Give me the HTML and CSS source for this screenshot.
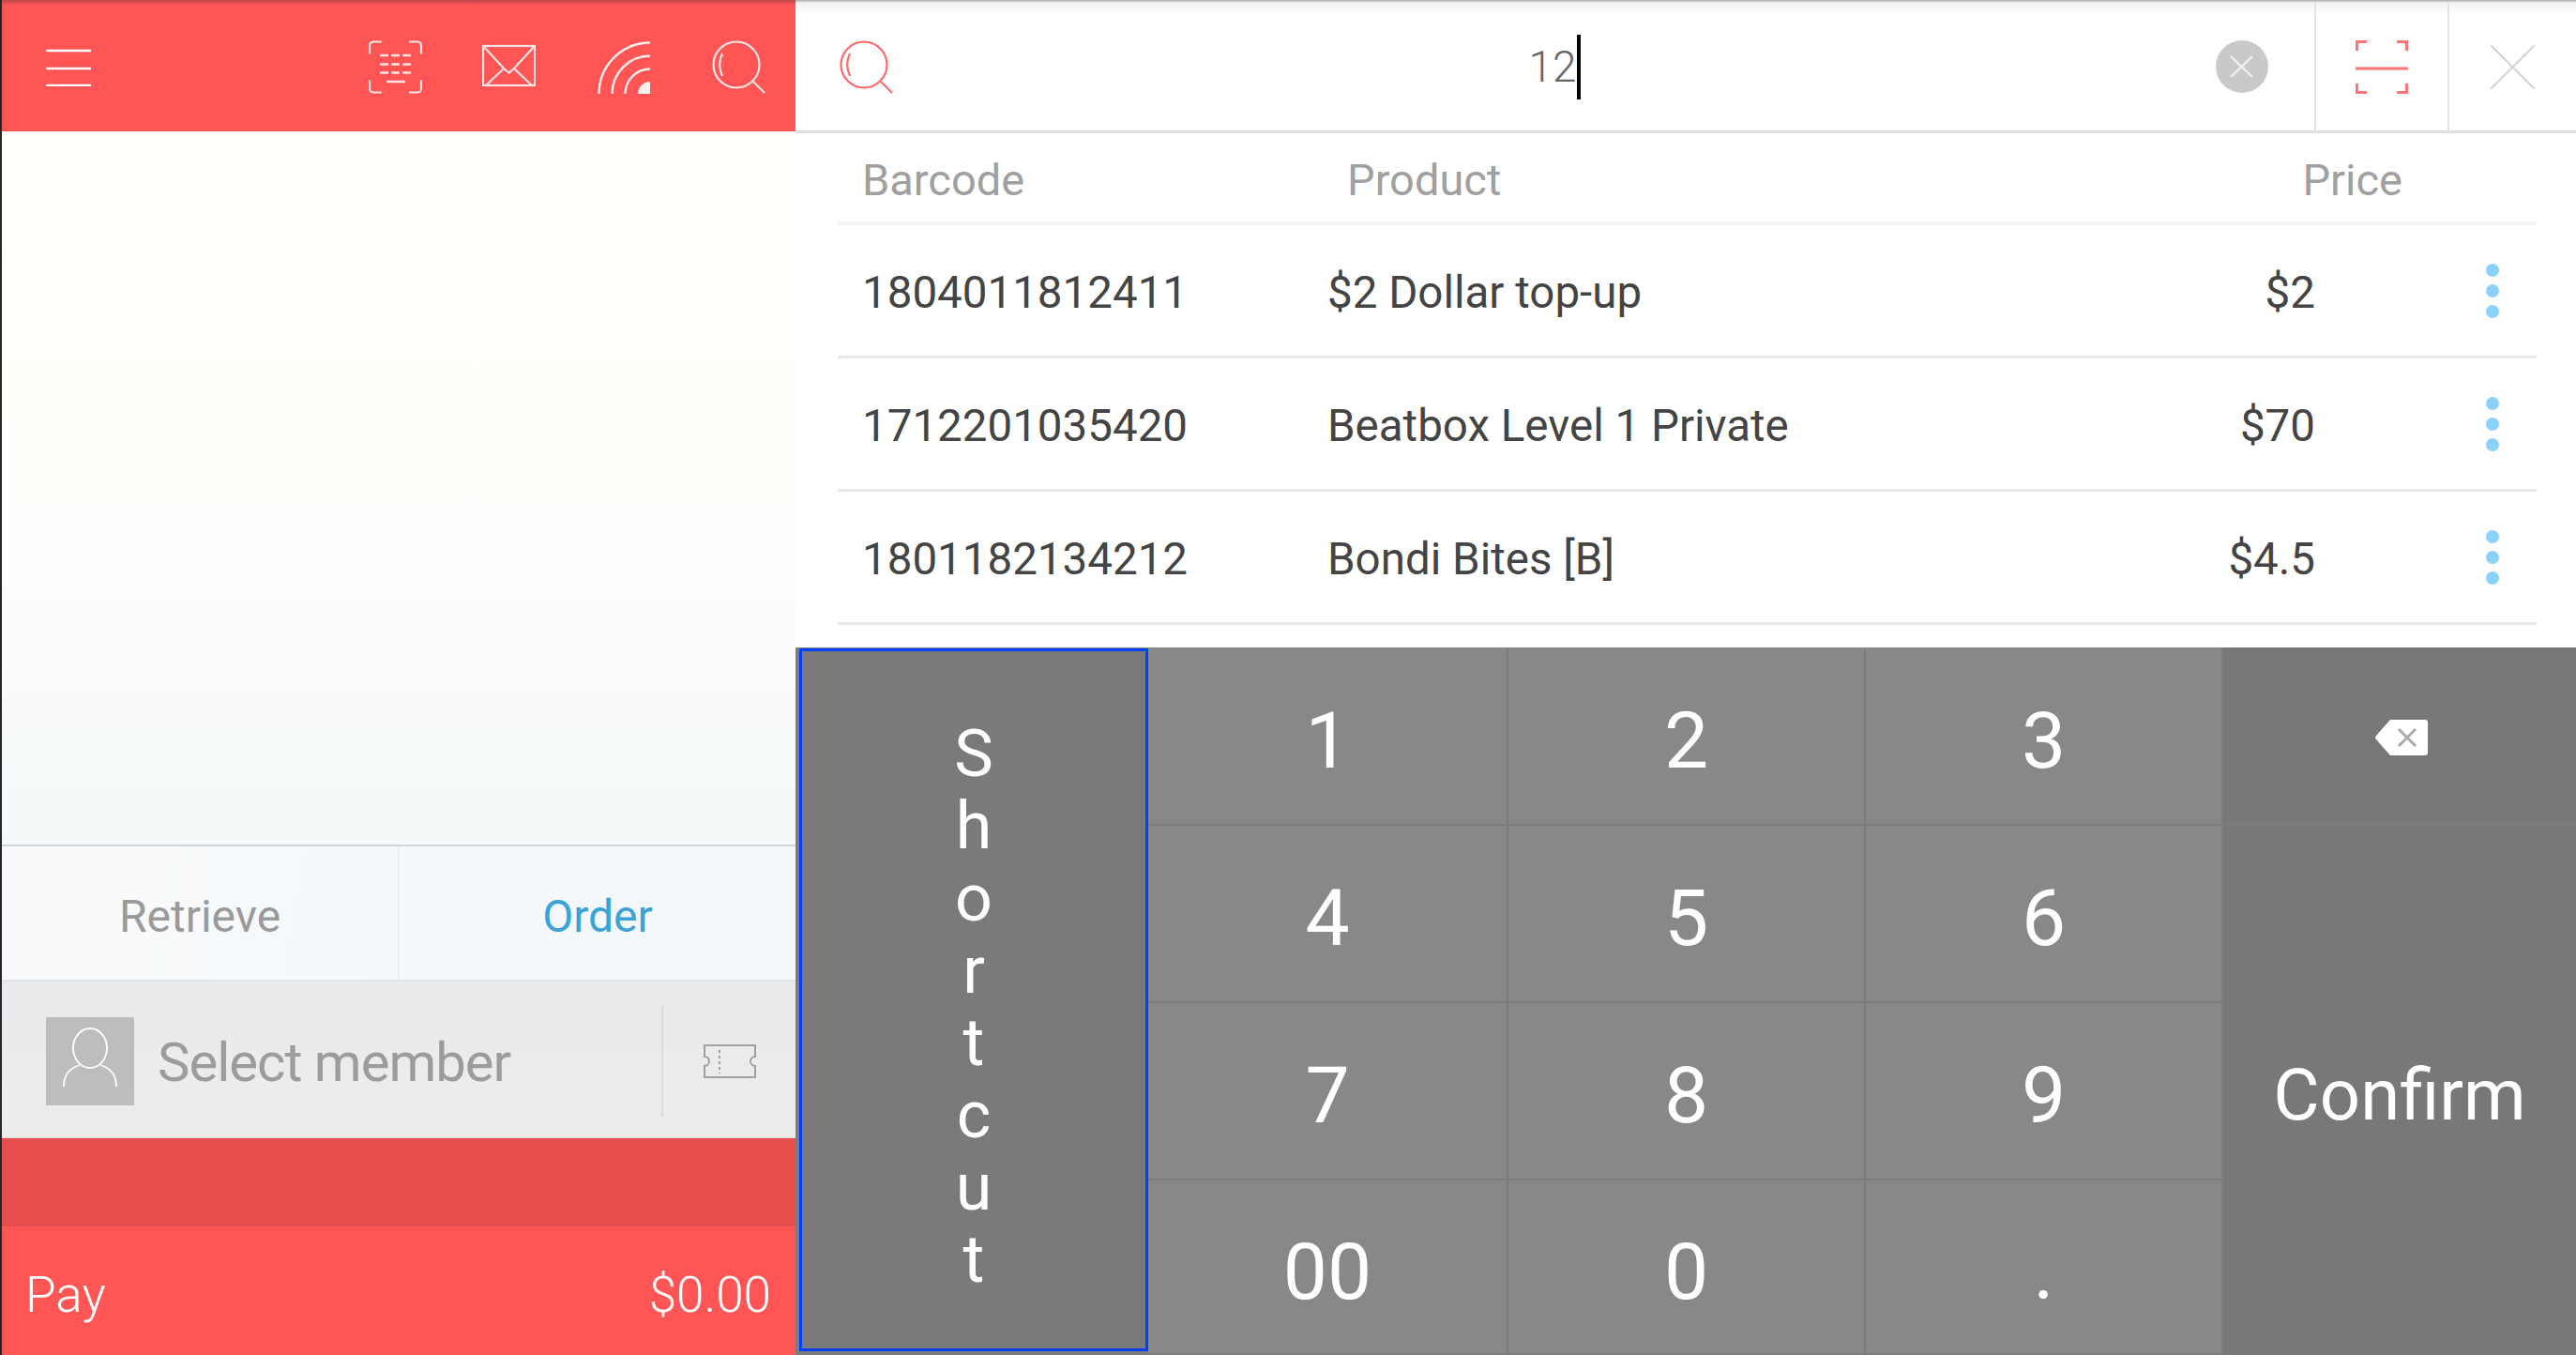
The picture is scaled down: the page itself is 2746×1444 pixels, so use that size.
FILE: index.html
```html
<!DOCTYPE html>
<html lang="en">
<head>
    <meta charset="UTF-8">
    <title>Product search</title>
    <link rel="stylesheet" href="styles.css">
</head>
<body>

    <div class="left-panel">
        <div class="top-bar">
            <svg class="menu-icon" viewBox="0 0 48 40" fill="none" stroke="#fff" stroke-width="2.4">
                <path d="M0 2h48M0 21h48M0 39h48"/>
            </svg>
            <div class="top-icons">
                <svg class="top-icon" viewBox="0 0 57 57" fill="none" stroke="#fff" stroke-width="2.2" opacity="0.85">
                    <path d="M14 1.500H5a4 4 0 0 0-4 4v9M43 1.500h9a4 4 0 0 1 4 4v9M14 55.500H5a4 4 0 0 1-4-4v-9M43 55.500h9a4 4 0 0 0 4-4v-9"/>
                    <path stroke-width="2.500" stroke-dasharray="9 3" d="M12 16h34M12 25.500h34M12 34.500h34"/>
                    <path stroke-width="2.500" d="M19 44h20"/>
                </svg>
                <svg class="top-icon top-icon-mail" viewBox="0 0 57 57" fill="none" stroke="#fff" stroke-width="2.200" opacity="0.85">
                    <rect x="1" y="6" width="55" height="42"/>
                    <path d="M2 7l22 24 4.500 3.500 4.500-3.500 22-24M4 48l19-18M53 48L34 30"/>
                </svg>
                <svg class="top-icon" viewBox="0 0 57 57" fill="none" stroke="#fff" stroke-width="2.400" opacity="0.9">
                    <path d="M1.500 57A54.500 54.500 0 0 1 56 2.500M15.500 57A40.500 40.500 0 0 1 56 16.500M29.500 57A26.500 26.500 0 0 1 56 30.500"/>
                    <path d="M43 57A13 13 0 0 1 56 44V57z" fill="#fff" stroke="none"/>
                </svg>
                <svg class="top-icon" viewBox="0 0 57 57" fill="none" stroke="#fff" stroke-width="2.200" opacity="0.85">
                    <circle cx="26" cy="26" r="24.500"/>
                    <path d="M11 14c-4 8-4 15 0 24M44 44l12 12"/>
                </svg>
            </div>
        </div>

        <div class="cart-area"></div>

        <div class="tabs">
            <div class="tab tab-retrieve">Retrieve</div>
            <div class="tab tab-order">Order</div>
        </div>

        <div class="member-row">
            <div class="avatar">
                <svg viewBox="0 0 94 94" fill="none" stroke="#fff" stroke-width="1.800">
                    <ellipse cx="47" cy="33" rx="18" ry="21"/>
                    <path d="M19 74c0-14 7-20 17-23M75 74c0-14-7-20-17-23"/>
                </svg>
            </div>
            <div class="member-label">Select member</div>
            <div class="coupon">
                <svg viewBox="0 0 56 36" fill="none" stroke="#a0a0a0" stroke-width="2">
                    <path d="M1 1h54v12a5 5 0 0 0 0 10v12H1V23a5 5 0 0 0 0-10z"/>
                    <path stroke-dasharray="3 3" d="M17 6v25"/>
                </svg>
            </div>
        </div>

        <div class="summary-bar"></div>

        <div class="pay-bar">
            <span>Pay</span>
            <span>$0.00</span>
        </div>
    </div>

    <div class="right-panel">
        <div class="search-bar">
            <svg class="search-icon" viewBox="0 0 57 57" fill="none" stroke="#ff6b6b" stroke-width="2.200">
                <circle cx="26" cy="26" r="24.500"/>
                <path d="M11 14c-4 8-4 15 0 24M44 44l12 12"/>
            </svg>
            <div class="search-input"><span>12</span><i class="caret"></i></div>
            <div class="clear-btn">
                <svg viewBox="0 0 56 56" fill="none" stroke="#f4f4f4" stroke-width="2">
                    <path d="M16 17l23 22M39 17L16 39"/>
                </svg>
            </div>
            <div class="bar-cell">
                <svg class="scan-icon" viewBox="0 0 56 57" fill="none" stroke="#ff7474" stroke-width="3">
                    <path d="M12 1.500H1.500V11M44 1.500h10.500V11M12 55.500H1.500V46M44 55.500h10.500V46M0 30h56"/>
                </svg>
            </div>
            <div class="bar-cell bar-cell-close">
                <svg class="close-icon" viewBox="0 0 47 47" fill="none" stroke="#d4d4d4" stroke-width="2">
                    <path d="M0 0l47 47M47 0L0 47"/>
                </svg>
            </div>
        </div>

        <div class="results">
            <div class="results-head">
                <div class="head-barcode">Barcode</div>
                <div class="head-product">Product</div>
                <div class="head-price">Price</div>
            </div>
            <div class="result-row">
                <div class="cell-barcode">1804011812411</div>
                <div class="cell-product">$2 Dollar top-up</div>
                <div class="cell-price">$2</div>
                <div class="more-dots"><i></i><i></i><i></i></div>
            </div>
            <div class="result-row">
                <div class="cell-barcode">1712201035420</div>
                <div class="cell-product">Beatbox Level 1 Private</div>
                <div class="cell-price">$70</div>
                <div class="more-dots"><i></i><i></i><i></i></div>
            </div>
            <div class="result-row">
                <div class="cell-barcode">1801182134212</div>
                <div class="cell-product">Bondi Bites [B]</div>
                <div class="cell-price">$4.5</div>
                <div class="more-dots"><i></i><i></i><i></i></div>
            </div>
        </div>

        <div class="keypad">
            <div class="key key-shortcut"><span>Shortcut</span></div>
            <div class="key">1</div>
            <div class="key">2</div>
            <div class="key">3</div>
            <div class="key key-side">
                <svg class="backspace-icon" viewBox="0 0 56 38">
                    <path d="M16 0h37a3 3 0 0 1 3 3v32a3 3 0 0 1-3 3H16L1 21a3 3 0 0 1 0-4z" fill="#fff"/>
                    <path d="M25 10l18 18M43 10L25 28" stroke="#aaa" stroke-width="3" fill="none"/>
                </svg>
            </div>
            <div class="key">4</div>
            <div class="key">5</div>
            <div class="key">6</div>
            <div class="key key-side key-confirm">Confirm</div>
            <div class="key">7</div>
            <div class="key">8</div>
            <div class="key">9</div>
            <div class="key">00</div>
            <div class="key">0</div>
            <div class="key">.</div>
        </div>
    </div>

</body>
</html>
```

FILE: styles.css
```css
html, body {
    height: 100%;
}
body {
    margin: 0;
    display: flex;
    height: 1444px;
    overflow: hidden;
    font-family: Roboto, "Liberation Sans", sans-serif;
    font-weight: 300;
    background-color: #fff;
}
svg {
    display: block;
}

/* left side */
.left-panel {
    width: 846px;
    border-left: 2px solid #26262a;
    display: flex;
    flex-direction: column;
    flex-shrink: 0;
}
.top-bar {
    height: 140px;
    box-sizing: border-box;
    background: linear-gradient(#b84a4c 0, #ff5555 5px);
    display: flex;
    align-items: center;
    padding: 3px 32px 0 47px;
}
.menu-icon {
    width: 48px;
    height: 40px;
}
.top-icons {
    margin-left: auto;
    display: flex;
    gap: 65px;
}
.top-icon {
    width: 57px;
    height: 57px;
}
.top-icon-mail {
    margin-left: -1px;
    margin-right: 1px;
}
.cart-area {
    flex: 1;
    background: linear-gradient(#fffffb 0, #fffefc 55%, #f4f8f9 100%);
    border-bottom: 2px solid #cfd4d6;
}
.tabs {
    height: 144px;
    box-sizing: border-box;
    display: flex;
    background: linear-gradient(100deg, #f9fafb, #f1f7fb);
    border-bottom: 2px solid #e3e6e8;
    font-size: 48px;
}
.tab {
    flex: 1;
    display: flex;
    align-items: center;
    justify-content: center;
    font-weight: 400;
    padding-top: 7px;
}
.tab-retrieve {
    color: #9a9a9a;
    border-right: 2px solid #ebeef0;
}
.tab-order {
    color: #3aa3d8;
}
.member-row {
    height: 167px;
    box-sizing: border-box;
    display: flex;
    align-items: center;
    padding: 4px 0 0 47px;
    background: linear-gradient(#e8eaec, #eeedeb);
    border-bottom: 2px solid #e6e2e0;
}
.avatar {
    width: 94px;
    height: 94px;
    background-color: #bcbdbe;
}
.member-label {
    margin-left: 25px;
    font-size: 58px;
    letter-spacing: -1px;
    font-weight: 400;
    color: #9c9c9c;
    padding-top: 3px;
}
.coupon {
    margin-left: auto;
    width: 143px;
    height: 118px;
    border-left: 2px solid #d8dadc;
    display: flex;
    align-items: center;
    justify-content: center;
    box-sizing: border-box;
}
.coupon svg {
    width: 56px;
    height: 36px;
}
.summary-bar {
    height: 94px;
    background-color: #e64e4e;
}
.pay-bar {
    height: 137px;
    box-sizing: border-box;
    background-color: #ff5555;
    color: #fff;
    display: flex;
    align-items: center;
    justify-content: space-between;
    padding: 8px 26px 0 25px;
    font-size: 53px;
}

/* right side */
.right-panel {
    flex: 1;
    display: flex;
    flex-direction: column;
    min-width: 0;
}
.search-bar {
    height: 142px;
    box-sizing: border-box;
    display: flex;
    align-items: center;
    padding-top: 3px;
    border-bottom: 3px solid #dedede;
    background: linear-gradient(#a9a9a9 0, #f3f3f3 3px, #fff 18px);
}
.search-icon {
    width: 57px;
    height: 57px;
    margin-left: 47px;
}
.search-input {
    flex: 1;
    display: flex;
    align-items: center;
    justify-content: center;
    font-size: 46px;
    color: #666;
}
.caret {
    width: 4px;
    height: 69px;
    background-color: #000;
}
.clear-btn {
    width: 56px;
    height: 56px;
    border-radius: 50%;
    background-color: #c9c9c9;
    margin-right: 49px;
}
.bar-cell {
    width: 142px;
    height: 100%;
    border-left: 2px solid #e4e4e4;
    box-sizing: border-box;
    display: flex;
    align-items: center;
    justify-content: center;
}
.bar-cell-close {
    width: 137px;
}
.scan-icon {
    width: 56px;
    height: 57px;
}
.close-icon {
    width: 47px;
    height: 47px;
}
.results {
    margin: 0 42px 0 45px;
    height: 548px;
}
.results-head {
    height: 98px;
    box-sizing: border-box;
    display: flex;
    align-items: center;
    padding-top: 4px;
    border-bottom: 4px solid #f3f3f3;
    font-size: 47px;
    font-weight: 400;
    color: #a0a0a0;
}
.head-barcode {
    width: 517px;
    padding-left: 26px;
}
.head-product {
    flex: 1;
}
.head-price {
    padding-right: 143px;
}
.result-row {
    height: 142px;
    box-sizing: border-box;
    display: flex;
    align-items: center;
    border-bottom: 3px solid #e8e8e8;
    font-size: 47.500px;
    font-weight: 400;
    color: #444;
}
.result-row > div:not(.more-dots) {
    padding-top: 5px;
}
.cell-barcode {
    width: 496px;
    padding-left: 26px;
}
.cell-product {
    flex: 1;
}
.cell-price {
    margin-right: 182px;
}
.more-dots {
    width: 14px;
    margin-right: 40px;
    display: flex;
    flex-direction: column;
    gap: 8px;
}
.more-dots i {
    width: 14px;
    height: 14px;
    border-radius: 50%;
    background-color: #88d2fb;
}

/* keypad */
.keypad {
    flex: 1;
    display: grid;
    grid-template-columns: 376px 384px 381px 381px 1fr;
    grid-template-rows: 190px 189px 189px 1fr;
    background-color: #7c7c7c;
    color: #fff;
    font-size: 84px;
    font-weight: 400;
}
.key {
    background-color: #888;
    border-right: 2px solid #7c7c7c;
    border-bottom: 2px solid #7c7c7c;
    padding-top: 10px;
    display: flex;
    align-items: center;
    justify-content: center;
    box-sizing: border-box;
}
.key-shortcut {
    grid-row: 1 / 5;
    background-color: #7a7a7a;
    border: 3px solid #0040ff;
    margin: 1px 0 4px 4px;
    padding-top: 15px;
    font-size: 70px;
    line-height: 77px;
}
.key-shortcut span {
    width: min-content;
    word-break: break-all;
    text-align: center;
}
.key-side {
    grid-column: 5;
    background-color: #787878;
    border-right: none;
    padding: 3px 0 0 4px;
}
.key-confirm {
    grid-row: 2 / 5;
    border-bottom: none;
    padding: 9px 0 0 0;
    font-size: 76px;
}
.backspace-icon {
    width: 56px;
    height: 38px;
}
```
